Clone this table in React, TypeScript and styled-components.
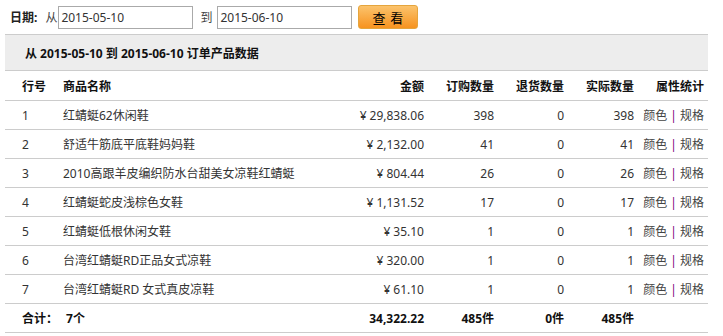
import React from 'react';
import styled, { createGlobalStyle } from 'styled-components';

const GlobalStyle = createGlobalStyle`
  body {
    margin: 0;
    background: #fff;
    font-family: "Noto Sans", "Noto Sans CJK SC", sans-serif;
    font-size: 12px;
    color: #333;
  }
`;

const Page = styled.div`
  width: 703px;
  padding: 0 5px;
`;

const FilterBar = styled.div`
  display: flex;
  align-items: center;
  height: 34px;
  padding-left: 5px;
`;

const FilterLabel = styled.span`
  font-weight: bold;
  color: #222;
  font-size: 12px;
`;

const FilterText = styled.span<{ gapLeft?: number; gapRight?: number }>`
  margin-left: ${({ gapLeft }) => gapLeft ?? 0}px;
  margin-right: ${({ gapRight }) => gapRight ?? 0}px;
  color: #444;
`;

const DateInput = styled.input`
  box-sizing: border-box;
  width: 135px;
  height: 23px;
  border: 1px solid #aaa;
  padding: 0 2px;
  font-family: "Noto Sans", "Noto Sans CJK SC", sans-serif;
  font-size: 12px;
  color: #333;
  outline: none;
`;

const SearchButton = styled.button`
  box-sizing: border-box;
  margin-left: 6px;
  width: 60px;
  height: 24px;
  border: 1px solid #e5a53d;
  border-radius: 3px;
  background: linear-gradient(#fbc36c, #f7931f);
  color: #000;
  font-family: "Noto Sans CJK SC", sans-serif;
  font-size: 13px;
  letter-spacing: 1px;
  padding: 0;
  cursor: pointer;
`;

const TitleBar = styled.div`
  box-sizing: border-box;
  height: 37px;
  display: flex;
  align-items: center;
  padding-left: 20px;
  background: #ededed;
  border-top: 1px solid #ccc;
  border-bottom: 1px solid #ccc;
  font-weight: bold;
  color: #111;
`;

const Row = styled.div<{ head?: boolean }>`
  display: grid;
  grid-template-columns: 53px 301px 70px 70px 70px 70px 69px;
  align-items: center;
  height: ${({ head }) => (head ? 30 : 29)}px;
  border-bottom: 1px solid #ccc;
  box-sizing: border-box;
  font-weight: ${({ head }) => (head ? 'bold' : 'normal')};
  color: ${({ head }) => (head ? '#111' : '#333')};
`;

const SumRow = styled(Row)`
  font-weight: bold;
  color: #111;
`;

const Cell = styled.div<{ right?: boolean; first?: boolean }>`
  text-align: ${({ right }) => (right ? 'right' : 'left')};
  padding-left: ${({ first, right }) => (first ? 17 : right ? 0 : 5)}px;
  padding-right: ${({ right }) => (right ? 5 : 0)}px;
  white-space: nowrap;
`;

const Yen = styled.span`
  margin-right: 3px;
`;

const Links = styled.div`
  text-align: right;
  padding-right: 4px;
  white-space: nowrap;
`;

const Link = styled.a`
  color: #444;
  text-decoration: none;
`;

const Sep = styled.span`
  color: #800080;
  margin: 0 3px;
`;

const TotalCount = styled.span`
  margin-left: 8px;
`;

type Item = { name: string; amount: string; buy: number; ret: number; real: number };

const items: Item[] = [
  { name: '红蜻蜓62休闲鞋', amount: '29,838.06', buy: 398, ret: 0, real: 398 },
  { name: '舒适牛筋底平底鞋妈妈鞋', amount: '2,132.00', buy: 41, ret: 0, real: 41 },
  { name: '2010高跟羊皮编织防水台甜美女凉鞋红蜻蜓', amount: '804.44', buy: 26, ret: 0, real: 26 },
  { name: '红蜻蜓蛇皮浅棕色女鞋', amount: '1,131.52', buy: 17, ret: 0, real: 17 },
  { name: '红蜻蜓低根休闲女鞋', amount: '35.10', buy: 1, ret: 0, real: 1 },
  { name: '台湾红蜻蜓RD正品女式凉鞋', amount: '320.00', buy: 1, ret: 0, real: 1 },
  { name: '台湾红蜻蜓RD 女式真皮凉鞋', amount: '61.10', buy: 1, ret: 0, real: 1 },
];

export default function App() {
  return (
    <Page>
      <GlobalStyle />
      <FilterBar>
        <FilterLabel>日期:</FilterLabel>
        <FilterText gapLeft={8} gapRight={1}>从</FilterText>
        <DateInput defaultValue="2015-05-10" />
        <FilterText gapLeft={7} gapRight={5}>到</FilterText>
        <DateInput defaultValue="2015-06-10" />
        <SearchButton>查 看</SearchButton>
      </FilterBar>
      <TitleBar>从 2015-05-10 到 2015-06-10 订单产品数据</TitleBar>
      <Row head>
        <Cell first>行号</Cell>
        <Cell>商品名称</Cell>
        <Cell right>金额</Cell>
        <Cell right>订购数量</Cell>
        <Cell right>退货数量</Cell>
        <Cell right>实际数量</Cell>
        <Links>属性统计</Links>
      </Row>
      {items.map((it, i) => (
        <Row key={i}>
          <Cell first>{i + 1}</Cell>
          <Cell>{it.name}</Cell>
          <Cell right>
            <Yen>¥</Yen>
            {it.amount}
          </Cell>
          <Cell right>{it.buy}</Cell>
          <Cell right>{it.ret}</Cell>
          <Cell right>{it.real}</Cell>
          <Links>
            <Link href="#">颜色</Link>
            <Sep>|</Sep>
            <Link href="#">规格</Link>
          </Links>
        </Row>
      ))}
      <SumRow>
        <Cell first>
          合计：<TotalCount>7个</TotalCount>
        </Cell>
        <Cell />
        <Cell right>34,322.22</Cell>
        <Cell right>485件</Cell>
        <Cell right>0件</Cell>
        <Cell right>485件</Cell>
        <Links />
      </SumRow>
    </Page>
  );
}
